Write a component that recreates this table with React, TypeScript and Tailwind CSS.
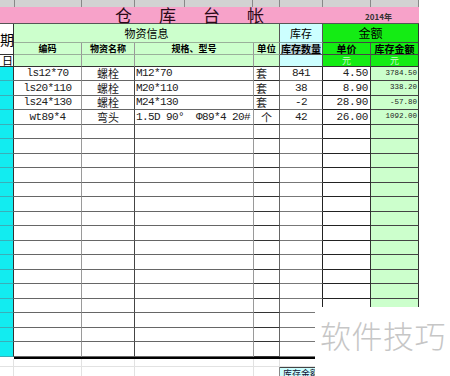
import React from "react";

const COLS = "grid grid-cols-[14px_68px_53px_119px_26px_43px_48px_48px]";
const CJK = "font-['Noto_Sans_CJK_SC',sans-serif]";
const MONO = "font-['Liberation_Mono','Noto_Sans_CJK_SC',monospace]";

const data: string[][] = [
  ["ls12*70", "螺栓", "M12*70", "套", "841", "4.50", "3784.50"],
  ["ls20*110", "螺栓", "M20*110", "套", "38", "8.90", "338.20"],
  ["ls24*130", "螺栓", "M24*130", "套", "-2", "28.90", "-57.80"],
  ["wt89*4", "弯头", "1.5D 90°  Φ89*4 20#", "个", "42", "26.00", "1092.00"],
];

function DataRow({ row, tall }: { row: string[]; tall: boolean }) {
  const r = row.length ? row : ["", "", "", "", "", "", ""];
  return (
    <div className={`${COLS} ${tall ? "h-[15px]" : "h-[14px]"} text-[#222] leading-none`}>
      <div className="bg-[#12ecf0] border-b border-b-[#3aaeb8] border-r border-r-[#333]" />
      <div className={`border-b border-b-[#666] border-r border-r-[#9a9a9a] flex items-center justify-center ${MONO} text-[11px] leading-none tracking-[-0.6px] whitespace-pre`}>
        {r[0]}
      </div>
      <div className={`border-b border-b-[#666] border-r border-r-[#444] flex items-center justify-center ${CJK} text-[11px] leading-none`}>
        {r[1]}
      </div>
      <div className={`border-b border-b-[#666] border-r border-r-[#9a9a9a] flex items-center pl-[1px] ${MONO} text-[11px] leading-none tracking-[-0.6px] whitespace-pre overflow-hidden`}>
        {r[2]}
      </div>
      <div className={`border-b border-b-[#333] border-r border-r-[#666] flex items-center ${r[3] === "个" ? "justify-center" : "pl-[2px]"} ${CJK} text-[11px] leading-none`}>
        {r[3]}
      </div>
      <div className={`border-b border-b-[#777] border-r border-r-[#222] flex items-center justify-center ${MONO} text-[11px] leading-none tracking-[-0.6px]`}>
        {r[4]}
      </div>
      <div className={`border-b border-b-[#222] border-r border-r-[#333] flex items-center justify-end pr-[2px] ${MONO} text-[11px] leading-none tracking-[-0.3px]`}>
        {r[5]}
      </div>
      <div className={`bg-[#ccffcc] border-b border-b-[#444] border-r border-r-[#333] flex items-center justify-end pr-[1px] ${MONO} text-[7.5px] leading-none`}>
        {r[6]}
      </div>
    </div>
  );
}

export default function App() {
  const rows: string[][] = [];
  for (let i = 0; i < 20; i++) rows.push(data[i] ?? []);
  return (
    <div className={`relative w-[450px] h-[376px] overflow-hidden bg-white ${CJK}`}>
      <div className="w-[419px]">
        {/* gray top strip */}
        <div className="flex h-[7px] bg-[#d2d2d2]">
          <div className="w-[15px] border-r border-[#888]" />
          <div className="w-[67px] border-r border-[#888]" />
          <div className="w-[53px] border-r border-[#888]" />
          <div className="w-[50px] border-r border-[#888]" />
          <div className="w-[68px] border-r border-[#888]" />
          <div className="w-[27px] border-r border-[#888]" />
          <div className="w-[43px] border-r border-[#888]" />
          <div className="w-[48px] border-r border-[#888]" />
          <div className="w-[48px] border-r border-[#888]" />
        </div>

        {/* pink title */}
        <div className="flex items-end h-[17px] bg-[#f7a2c9] border-b border-[#555] pl-[115px]">
          <div className="flex gap-[27px] text-[17px] leading-[17px] text-[#2a0a18]">
            <span>仓</span>
            <span>库</span>
            <span>台</span>
            <span>帐</span>
          </div>
          <span className="ml-[101px] mb-[2px] text-[8px] leading-[8px] font-bold text-[#333]">2014年</span>
        </div>

        {/* header */}
        <div className={`${COLS} grid-rows-[19px_12px_12px] text-black`}>
          <div className="row-span-2 bg-white border-r border-b border-[#333] overflow-hidden flex items-center text-[14px] leading-none">
            期
          </div>
          <div className="col-span-4 bg-[#ccffcc] border-b border-b-[#9ab09a] border-r border-r-[#555] flex items-center justify-center text-[11px] leading-none">
            物资信息
          </div>
          <div className="bg-[#ccffff] border-b border-b-[#8aa] border-r border-r-[#555] flex items-center justify-center text-[11px] leading-none">
            库存
          </div>
          <div className="col-span-2 bg-[#14ec14] border-b border-b-[#444] border-r border-r-[#333] flex items-center justify-center text-[12px] leading-none">
            金额
          </div>

          <div className="bg-[#ccffcc] border-b border-b-[#9ab09a] border-r border-r-[#999] flex items-center justify-center text-[9px] font-bold leading-none">
            编码
          </div>
          <div className="bg-[#ccffcc] border-b border-b-[#9ab09a] border-r border-r-[#999] flex items-center justify-center text-[9px] font-bold leading-none">
            物资名称
          </div>
          <div className="bg-[#ccffcc] border-b border-b-[#9ab09a] border-r border-r-[#999] flex items-center justify-center text-[9px] font-bold leading-none">
            规格、型号
          </div>
          <div className="bg-[#ccffcc] border-b border-b-[#9ab09a] border-r border-r-[#555] flex items-center justify-center text-[9.5px] font-bold leading-none">
            单位
          </div>
          <div className="bg-[#ccffff] border-b border-b-[#555] border-r border-r-[#555] flex items-center justify-center text-[10px] font-bold leading-none">
            <span className="bg-[#b8d4dc]">库存数量</span>
          </div>
          <div className="bg-[#14ec14] border-b border-b-[#444] border-r border-r-[#555] flex items-center justify-center text-[10px] font-bold leading-none">
            单价
          </div>
          <div className="bg-[#14ec14] border-b border-b-[#444] border-r border-r-[#333] flex items-center justify-center text-[10px] font-bold leading-none">
            库存金额
          </div>

          <div className="bg-white border-r border-b border-[#333] flex items-center text-[11px] leading-none pl-[2px]">
            日
          </div>
          <div className="bg-[#ccffcc] border-b border-b-[#333] border-r border-r-[#999]" />
          <div className="bg-[#ccffcc] border-b border-b-[#333] border-r border-r-[#999]" />
          <div className="bg-[#ccffcc] border-b border-b-[#333] border-r border-r-[#999]" />
          <div className="bg-[#ccffcc] border-b border-b-[#333] border-r border-r-[#555]" />
          <div className="bg-[#ccffff] border-b border-b-[#333] border-r border-r-[#555]" />
          <div className="bg-[#14ec14] border-b border-b-[#333] border-r border-r-[#555] flex items-center justify-center text-[9px] leading-none text-[#c8f8c8]">
            元
          </div>
          <div className="bg-[#14ec14] border-b border-b-[#333] border-r border-r-[#333] flex items-center justify-center text-[9px] leading-none text-[#c8f8c8]">
            元
          </div>
        </div>

        {/* data rows */}
        {rows.map((row, i) => (
          <DataRow key={i} row={row} tall={i % 2 === 1} />
        ))}

        {/* bottom */}
        <div className="flex h-[2px]">
          <div className="w-[14px]" />
          <div className="flex-1 bg-black" />
        </div>
        <div className={`${COLS} h-[8px]`}>
          <div className="border-r border-b border-[#e2e2e2]" />
          <div className="border-r border-b border-[#e2e2e2]" />
          <div className="border-r border-b border-[#e2e2e2]" />
          <div className="border-r border-b border-[#e2e2e2]" />
          <div className="border-r border-b border-[#e2e2e2]" />
          <div className="border-r border-b border-[#e2e2e2]" />
          <div className="border-r border-b border-[#e2e2e2]" />
          <div className="border-r border-b border-[#e2e2e2]" />
        </div>
        <div className={`${COLS} h-[9px]`}>
          <div className="border-r border-[#e2e2e2]" />
          <div className="border-r border-[#e2e2e2]" />
          <div className="border-r border-[#e2e2e2]" />
          <div className="border-r border-[#e2e2e2]" />
          <div className="border-r border-[#888]" />
          <div className="bg-[#ccffff] border-t border-[#444] text-[9px] leading-[9px] pl-[3px] pt-[1px] text-[#113] whitespace-nowrap overflow-hidden">
            库存金额
          </div>
          <div />
          <div />
        </div>
      </div>

      {/* watermark */}
      <div className="absolute left-[315px] top-[307px] w-[135px] h-[69px] bg-white">
        <div className="pl-[5px] pt-[11px] text-[31px] leading-[34px] tracking-[0.5px] text-[#c6c6c6] font-light whitespace-nowrap">
          软件技巧
        </div>
      </div>
    </div>
  );
}
